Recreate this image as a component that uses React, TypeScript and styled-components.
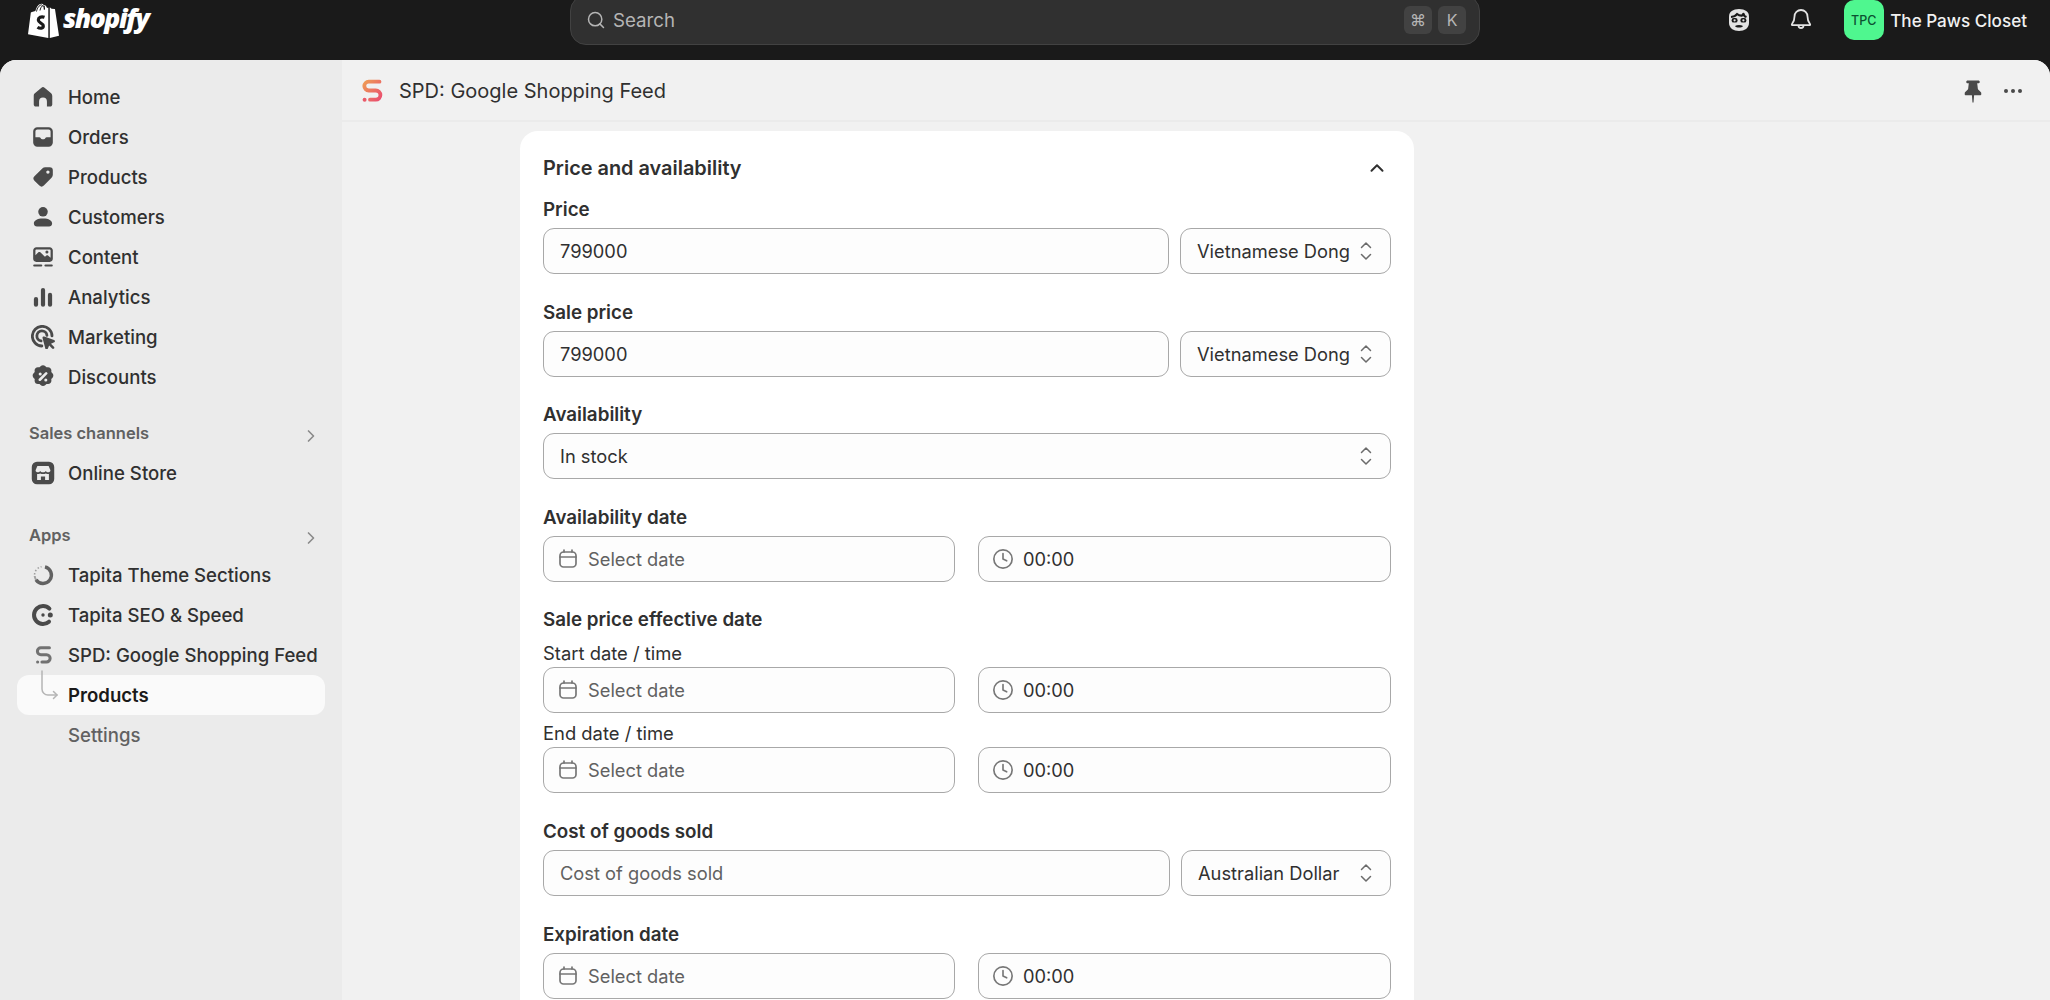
import React from 'react'
import styled, { createGlobalStyle } from 'styled-components'
import { ChevronRight, ChevronUp, Clock, Search } from 'lucide-react'

const GlobalStyle = createGlobalStyle`
    html, body {
        margin: 0;
        padding: 0;
        height: 100%;
        overflow: hidden;
        background: #1a1a1a;
    }
    * {
        box-sizing: border-box;
    }
    body {
        font-family: Inter, "Liberation Sans", sans-serif;
        color: #303030;
    }
`

/* ---------- icons ---------- */

const Icon = ({ children, size = 24 }: { children: React.ReactNode; size?: number }) => (
    <svg width={size} height={size} viewBox="1.450 1.450 17.100 17.100" fill="currentColor">
        {children}
    </svg>
)

const HomeIcon = () => (
    <Icon>
        <path d="M8.900 3.400a1.700 1.700 0 0 1 2.200 0l4.700 4a2.400 2.400 0 0 1 .8 1.800v6.100c0 .9-.7 1.500-1.500 1.500h-2.300v-3.600a2.800 2.800 0 0 0-5.600 0v3.600H4.900c-.8 0-1.500-.6-1.500-1.500V9.200c0-.7.3-1.400.8-1.800l4.700-4z" />
    </Icon>
)
const OrdersIcon = () => (
    <Icon>
        <path
            fillRule="evenodd"
            d="M6 3h8a3 3 0 0 1 3 3v8a3 3 0 0 1-3 3H6a3 3 0 0 1-3-3V6a3 3 0 0 1 3-3zM4.600 10.200V6c0-.8.6-1.400 1.400-1.400h8c.8 0 1.400.6 1.400 1.400v4.200h-2.700c-.5 0-.9.3-1.100.7-.2.4-.7.7-1.600.7s-1.400-.3-1.600-.7c-.2-.4-.6-.7-1.100-.7H4.600z"
        />
    </Icon>
)
const TagIcon = () => (
    <Icon>
        <path
            fillRule="evenodd"
            d="M11.600 3h3.200A2.200 2.200 0 0 1 17 5.200v3.200c0 .8-.3 1.500-.9 2.100l-5.500 5.600a2.300 2.300 0 0 1-3.200 0l-3.500-3.500a2.300 2.300 0 0 1 0-3.200l5.600-5.500c.6-.6 1.300-.9 2.100-.9zM13.500 7.700a1.200 1.200 0 1 0 0-2.400 1.200 1.200 0 0 0 0 2.400z"
        />
    </Icon>
)
const PersonIcon = () => (
    <Icon>
        <circle cx="10" cy="6.300" r="3.400" />
        <path d="M3.500 14.700c0-2.300 2.200-3.700 6.500-3.700s6.500 1.400 6.500 3.700c0 1.300-1 2.100-2.200 2.100H5.700c-1.200 0-2.200-.8-2.200-2.100z" />
    </Icon>
)
const ContentIcon = () => (
    <Icon>
        <path
            fillRule="evenodd"
            d="M5.200 3h9.600C16 3 17 4 17 5.200v6.100c0 1.200-1 2.200-2.200 2.200H5.200C4 13.500 3 12.500 3 11.300V5.200C3 4 4 3 5.200 3zM4.600 5.300v3.400l2.100-2c.4-.4 1-.4 1.400 0l3.300 3.100 1-.8c.4-.3.9-.3 1.200 0l1.800 1.500V5.300c0-.4-.3-.7-.7-.7H5.300c-.4 0-.7.3-.7.700zM12.800 7.500a1.100 1.100 0 1 0 0-2.200 1.100 1.100 0 0 0 0 2.200z"
        />
        <rect x="3" y="15.300" width="6.500" height="1.500" rx=".75" />
        <rect x="11" y="15.300" width="6" height="1.500" rx=".75" />
    </Icon>
)
const AnalyticsIcon = () => (
    <Icon>
        <rect x="3.500" y="10" width="3" height="7" rx="1.500" />
        <rect x="8.500" y="3.500" width="3" height="13.500" rx="1.500" />
        <rect x="13.500" y="7" width="3" height="10" rx="1.500" />
    </Icon>
)
const MarketingIcon = () => (
    <Icon>
        <path d="M9.200 16.400A7 7 0 1 1 16.400 9.200" fill="none" stroke="currentColor" strokeWidth="2" strokeLinecap="round" />
        <path d="M8.600 12.800A3.600 3.600 0 1 1 12.800 8.800" fill="none" stroke="currentColor" strokeWidth="2" strokeLinecap="round" />
        <path d="M9.700 10.900c-.3-.8.400-1.500 1.200-1.200l7 2.500c.8.300.8 1.300.1 1.600l-2.300 1 2.100 2.100c.4.400.4 1 0 1.300-.4.400-.9.400-1.300 0l-2.100-2.100-1 2.300c-.3.700-1.400.7-1.700-.1l-2-7.400z" />
    </Icon>
)
const DiscountIcon = () => (
    <Icon>
        <path
            fillRule="evenodd"
            d="M8.300 2.300c.9-.9 2.500-.9 3.400 0l.8.8 1.100-.1c1.300 0 2.400 1 2.400 2.400l-.1 1.100.8.8c.9.900.9 2.500 0 3.400l-.8.800.1 1.100c0 1.300-1 2.400-2.400 2.400l-1.100-.1-.8.800c-.9.900-2.500.9-3.400 0l-.8-.8-1.100.1c-1.300 0-2.400-1-2.400-2.400l.1-1.100-.8-.8c-.9-.9-.9-2.500 0-3.400l.8-.8-.1-1.100c0-1.300 1-2.400 2.400-2.400l1.100.1.8-.8zM8 9a1.100 1.100 0 1 0 0-2.200A1.100 1.100 0 0 0 8 9zm4 4.200a1.100 1.100 0 1 0 0-2.200 1.100 1.100 0 0 0 0 2.200zm.9-5.100a.9.900 0 0 0-1.300-1.300l-4.500 4.500a.9.900 0 0 0 1.300 1.300l4.500-4.500z"
        />
    </Icon>
)
const StoreIcon = () => (
    <Icon>
        <path
            fillRule="evenodd"
            d="M5.700 2h8.600A3.700 3.700 0 0 1 18 5.700v8.600a3.700 3.700 0 0 1-3.700 3.700H5.700A3.700 3.700 0 0 1 2 14.300V5.700A3.700 3.700 0 0 1 5.700 2zM6 5h8l1.300 3c0 1-.8 1.500-1.600 1.500S12.300 9 12 8.500c-.3.500-1 1-2 1s-1.700-.5-2-1c-.3.500-.9 1-1.700 1S4.700 9 4.700 8L6 5zm-.2 5.800c.9 0 1.600-.1 2.200-.5.600.3 1.200.5 2 .5s1.400-.2 2-.5c.6.400 1.300.5 2.200.5V15h-2.700v-2.500h-3V15H5.800v-4.200z"
        />
    </Icon>
)
const ThemeAppIcon = () => (
    <svg width="24" height="24" viewBox="0 0 24 24" fill="none" stroke="currentColor">
        <path d="M14 3.900A8.400 8.400 0 1 1 5 16.700" strokeWidth="3.400" opacity=".85" />
        <path d="M5 16.700A8.400 8.400 0 0 1 3.700 13" strokeWidth="2" opacity=".45" />
        <path d="M3.600 11.500A8.400 8.400 0 0 1 10.500 3.700" strokeWidth="1.600" strokeDasharray="1.400 2" opacity=".5" />
    </svg>
)
const SeoAppIcon = () => (
    <svg width="24" height="24" viewBox="0 0 24 24" fill="none" stroke="currentColor">
        <path d="M18.400 5.600A9 9 0 1 0 18 18.700" strokeWidth="4" strokeLinecap="round" />
        <circle cx="12" cy="12" r="1.700" fill="currentColor" stroke="none" />
        <circle cx="19.300" cy="12" r="2.500" fill="currentColor" stroke="none" />
    </svg>
)
const SpdLogo = ({ gradient, size = 24 }: { gradient?: boolean; size?: number }) => (
    <svg width={size} height={size * 1.15} viewBox="0 0 24 27.600" fill="none">
        {gradient && (
            <defs>
                <linearGradient id="spdGrad" x1="0" y1="0" x2="1" y2="1">
                    <stop offset="0" stopColor="#ee9a55" />
                    <stop offset="1" stopColor="#ea4e6f" />
                </linearGradient>
            </defs>
        )}
        <path
            d="M19.500 4.700H8.700a4.300 4.300 0 0 0 0 8.800h7.100a4.500 4.500 0 0 1 0 9.200H10"
            stroke={gradient ? 'url(#spdGrad)' : 'currentColor'}
            strokeWidth="3.800"
            strokeLinecap="round"
            opacity={gradient ? 1 : 0.75}
        />
        <circle cx="4.600" cy="22.700" r="2" fill={gradient ? '#ea5a6a' : 'currentColor'} opacity={gradient ? 1 : 0.75} />
    </svg>
)
const ConnectorIcon = () => (
    <svg width="22" height="32" viewBox="0 0 22 32" fill="none" stroke="#b5b5b5" strokeWidth="1.500" strokeLinecap="round" strokeLinejoin="round">
        <path d="M2 1v18a6 6 0 0 0 6 6h9" />
        <path d="M13.500 21.500L17 25l-3.500 3.500" />
    </svg>
)
const SortIcon = () => (
    <svg width="16" height="22" viewBox="0 0 16 22" fill="none" stroke="#6b6b6b" strokeWidth="1.500" strokeLinecap="round" strokeLinejoin="round">
        <path d="M3.500 7.500L8 3l4.500 4.500" />
        <path d="M3.500 14.500L8 19l4.500-4.500" />
    </svg>
)
const CalendarIcon = () => (
    <svg width="22" height="22" viewBox="0 0 22 22" fill="none" stroke="#777" strokeWidth="1.700" strokeLinecap="round">
        <rect x="3" y="4" width="16" height="15" rx="3.500" />
        <path d="M3 9h16M7 2v2M15 2v2" />
    </svg>
)
const PinIcon = () => (
    <Icon size={24}>
        <path d="M6.200 2.500h7.600c.6 0 1 .4 1 1s-.4 1-1 1H13l.5 4.200 2 2.100c.3.300.4.500.4.900v.600c0 .500-.4.800-.8.800h-4.300l-.4 4.700c0 .3-.2.500-.4.500s-.4-.2-.4-.5l-.4-4.700H4.900c-.5 0-.8-.3-.8-.8v-.600c0-.4.100-.6.400-.9l2-2.100L7 4.500h-.8c-.6 0-1-.4-1-1s.4-1 1-1z" />
    </Icon>
)
const BellIcon = () => (
    <svg width="24" height="26" viewBox="0 0 24 26" fill="none" stroke="currentColor" strokeWidth="1.800" strokeLinejoin="round">
        <path d="M12 3a6.500 6.500 0 0 0-6.500 6.500c0 4-1.200 6-2.500 7.500-.4.500-.1 1.200.6 1.200h16.800c.7 0 1-.7.600-1.200-1.300-1.500-2.500-3.500-2.500-7.500A6.500 6.500 0 0 0 12 3z" />
        <path d="M9.500 18.500a2.500 2.500 0 0 0 5 0" />
    </svg>
)
const FaceIcon = () => (
    <svg width="22" height="24" viewBox="0 0 22 24" fill="none">
        <path d="M1 8.500C1 3.800 5 1 11 1s10 2.800 10 7.500v6.500c0 5-4.500 8-10 8S1 20 1 15V8.500z" fill="currentColor" />
        <path d="M3 9c2.500-.2 4.500-.8 6-3 1.500 1.200 3 1.800 5 1.600l1.500-1.800 1 2.400 2 .8" stroke="#1a1a1a" strokeWidth="2.200" strokeLinejoin="round" />
        <rect x="3.600" y="10" width="6" height="4.600" rx="2.200" fill="#1a1a1a" />
        <rect x="12.400" y="10" width="6" height="4.600" rx="2.200" fill="#1a1a1a" />
        <circle cx="6.600" cy="12.300" r="1.100" fill="currentColor" />
        <circle cx="15.400" cy="12.300" r="1.100" fill="currentColor" />
        <path d="M7 18c2.200-1.400 5.800-1.400 8 0-1 2-7 2-8 0z" fill="#1a1a1a" />
    </svg>
)
const ShopifyBag = () => (
    <svg width="31" height="36" viewBox="0 0 31 36">
        <path
            fill="#fff"
            d="M20.500 5.500l-1.500.5c-.4-1.500-1.300-3-3-3h-.300C15 2 14.300 1.600 13.600 1.700 9.800 1.800 8 6.600 7.400 9l-3.500 1.100c-1 .3-1.100.4-1.200 1.300L0 32.300 20.300 36V5.500h.2z"
        />
        <path fill="#fff" d="M21.800 36L31 33.700 27 7.200c0-.2-.2-.3-.4-.3l-3-.2-1.800-1.500V36z" />
        <path
            fill="none"
            stroke="#1a1a1a"
            strokeWidth="1"
            d="M8.500 9.500C9 6.500 11 3 13.800 2.800M12 8.500c.3-2 1.500-4.500 3-5 1 1 1.200 2.800 1.200 4M16.500 7.500c.1-1.500 0-3-.5-4"
        />
        <path
            fill="none"
            stroke="#1a1a1a"
            strokeWidth="3.200"
            d="M16.500 15.300c-3.400-1.200-6.200.2-6.200 2.600 0 3.200 5 3 5 6 0 2.600-3.300 3-5.800 1.300"
        />
    </svg>
)

/* ---------- shell ---------- */

const Page = styled.div`
    width: 2050px;
    height: 1000px;
    display: flex;
    flex-direction: column;
    overflow: hidden;
    background: #1a1a1a;
`

const TopBar = styled.header`
    height: 60px;
    flex: none;
    display: grid;
    grid-template-columns: 570px 910px 1fr;
    grid-template-rows: 40px;
    align-items: center;
    color: #e3e3e3;
`

const Brand = styled.div`
    display: flex;
    align-items: center;
    gap: 4px;
    padding-left: 28px;
    color: #fff;
`

const BrandName = styled.span`
    font-family: "Open Sans", Inter, sans-serif;
    font-size: 26.500px;
    font-weight: 800;
    font-style: italic;
    letter-spacing: -1.500px;
    line-height: 1;
    margin-top: -4px;
`

const SearchBox = styled.div`
    height: 50px;
    display: flex;
    align-items: center;
    gap: 6px;
    padding: 0 13px 0 15px;
    background: #303030;
    border: 1px solid #424242;
    border-radius: 16px;
    color: #b5b5b5;
    font-size: 18.700px;
`

const SearchLabel = styled.span`
    flex: 1;
    margin-left: 1px;
`

const Kbd = styled.span`
    width: 28px;
    height: 28px;
    display: flex;
    align-items: center;
    justify-content: center;
    background: #424242;
    border-radius: 6px;
    font-size: 16px;
    color: #b5b5b5;
`

const TopActions = styled.div`
    display: flex;
    align-items: center;
    justify-content: flex-end;
    padding-right: 23px;
`

const TopIcon = styled.span<{ $gap: number }>`
    display: flex;
    margin-right: ${({ $gap }) => $gap}px;
`

const Avatar = styled.span`
    width: 40px;
    height: 40px;
    display: flex;
    align-items: center;
    justify-content: center;
    background: #4ff78f;
    border-radius: 10px;
    color: #0c5132;
    font-size: 12.500px;
    font-weight: 500;
`

const ShopName = styled.span`
    margin-left: 6.500px;
    font-size: 17.100px;
    font-weight: 500;
    color: #f1f1f1;
`

const Body = styled.div`
    flex: 1;
    min-height: 0;
    display: flex;
    overflow: hidden;
    border-radius: 16px 16px 0 0;
    background: #f1f1f1;
`

/* ---------- sidebar ---------- */

const Sidebar = styled.nav`
    width: 342px;
    flex: none;
    background: #ebebeb;
    padding: 16.600px 17px 0;
`

const NavSection = styled.div<{ $top?: number }>`
    margin-top: ${({ $top = 0 }) => $top}px;
`

const SectionHead = styled.div`
    height: 40px;
    display: flex;
    align-items: center;
    justify-content: space-between;
    padding: 0 0 0 12px;
    font-size: 16.500px;
    font-weight: 600;
    color: #616161;
`

const HeadChevron = styled.span`
    display: flex;
    margin: 7px 4px 0 0;
    color: #8a8a8a;
`

const NavRow = styled.a<{ $active?: boolean; $muted?: boolean }>`
    position: relative;
    height: 40px;
    display: flex;
    align-items: center;
    gap: 13px;
    padding-left: 14px;
    border-radius: 12px;
    font-size: 18.600px;
    font-weight: ${({ $active }) => ($active ? 600 : 500)};
    color: ${({ $active, $muted }) => ($active ? '#1a1a1a' : $muted ? '#616161' : '#303030')};
    background: ${({ $active }) => ($active ? '#fafafa' : 'transparent')};
    white-space: nowrap;
`

const NavIcon = styled.span`
    width: 24px;
    height: 24px;
    flex: none;
    display: flex;
    align-items: center;
    justify-content: center;
    color: #4a4a4a;
`

const Connector = styled.span`
    position: absolute;
    left: 23px;
    top: -5px;
    display: flex;
`

/* ---------- main ---------- */

const Main = styled.main`
    flex: 1;
    min-width: 0;
    background: #f1f1f1;
`

const AppHeader = styled.div`
    height: 62px;
    display: flex;
    align-items: center;
    padding: 2px 28px 0 18px;
    border-bottom: 2px solid #ebebeb;
`

const AppTitle = styled.h1`
    flex: 1;
    margin: 0 0 0 15px;
    font-size: 20px;
    font-weight: 400;
    color: #303030;
`

const HeaderAction = styled.span`
    display: flex;
    margin-right: 1px;
    color: #4a4a4a;
`

const Dots = styled.span`
    display: flex;
    gap: 3px;
    margin-left: 18px;

    & > i {
        width: 4px;
        height: 4px;
        border-radius: 50%;
        background: #4a4a4a;
    }
`

const Card = styled.section`
    width: 894px;
    margin: 9px 0 0 178px;
    padding: 23px 23px 40px;
    background: #fff;
    border-radius: 18px 18px 0 0;
`

const CardHead = styled.div`
    height: 28px;
    display: flex;
    align-items: center;
    justify-content: space-between;
    padding-right: 3px;
    margin-bottom: 16px;
    color: #303030;
`

const CardTitle = styled.h2`
    margin: 0;
    font-size: 19.900px;
    font-weight: 600;
`

const Form = styled.div`
    display: flex;
    flex-direction: column;
    gap: 26.600px;
`

const Field = styled.div`
    display: flex;
    flex-direction: column;
`

const Label = styled.label<{ $sub?: boolean }>`
    height: 24px;
    line-height: 24px;
    margin-bottom: ${({ $sub }) => ($sub ? 2 : 6)}px;
    font-size: ${({ $sub }) => ($sub ? 18.400 : 18.800)}px;
    font-weight: ${({ $sub }) => ($sub ? 400 : 600)};
    color: #303030;
`

const GroupLabel = styled(Label)`
    margin-bottom: 9px;
`

const SubField = styled.div`
    display: flex;
    flex-direction: column;
    margin-bottom: 8px;

    &:last-child {
        margin-bottom: 0;
    }
`

const Row = styled.div<{ $even?: boolean; $gap: number }>`
    display: ${({ $even }) => ($even ? 'grid' : 'flex')};
    grid-template-columns: 412px 1fr;
    gap: ${({ $gap }) => $gap}px;
`

const Control = styled.div<{ $grow?: boolean; $width?: number; $hasIcon?: boolean }>`
    height: 46px;
    flex: ${({ $grow }) => ($grow ? '1' : 'none')};
    width: ${({ $width }) => ($width ? `${$width}px` : 'auto')};
    min-width: 0;
    display: flex;
    align-items: center;
    gap: ${({ $hasIcon }) => ($hasIcon ? '9px' : '0')};
    padding: ${({ $hasIcon }) => ($hasIcon ? '0 15px 0 13px' : '0 16px 0 16px')};
    background: #fdfdfd;
    border: 1.300px solid #a8a8a8;
    border-radius: 11px;
    font-size: 18.300px;
    color: #303030;
    white-space: nowrap;
`

const Value = styled.span<{ $placeholder?: boolean }>`
    flex: 1;
    color: ${({ $placeholder }) => ($placeholder ? '#616161' : '#303030')};
`

const ClockWrap = styled.span`
    display: flex;
    color: #777;
`

/* ---------- data ---------- */

const mainNav = [
    { label: 'Home', icon: <HomeIcon /> },
    { label: 'Orders', icon: <OrdersIcon /> },
    { label: 'Products', icon: <TagIcon /> },
    { label: 'Customers', icon: <PersonIcon /> },
    { label: 'Content', icon: <ContentIcon /> },
    { label: 'Analytics', icon: <AnalyticsIcon /> },
    { label: 'Marketing', icon: <MarketingIcon /> },
    { label: 'Discounts', icon: <DiscountIcon /> }
]

const TextField = ({ value, placeholder }: { value: string; placeholder?: boolean }) => (
    <Control $grow>
        <Value $placeholder={placeholder}>{value}</Value>
    </Control>
)

const SelectField = ({ value, width, grow }: { value: string; width?: number; grow?: boolean }) => (
    <Control $width={width} $grow={grow}>
        <Value>{value}</Value>
        <SortIcon />
    </Control>
)

const DateTimeRow = () => (
    <Row $even $gap={23}>
        <Control $hasIcon>
            <CalendarIcon />
            <Value $placeholder>Select date</Value>
        </Control>
        <Control $hasIcon>
            <ClockWrap>
                <Clock size={22} strokeWidth={1.800} />
            </ClockWrap>
            <Value>00:00</Value>
        </Control>
    </Row>
)

export default function App() {
    return (
        <Page>
            <GlobalStyle />
            <TopBar>
                <Brand>
                    <ShopifyBag />
                    <BrandName>shopify</BrandName>
                </Brand>
                <SearchBox>
                    <Search size={20} strokeWidth={1.800} />
                    <SearchLabel>Search</SearchLabel>
                    <Kbd>⌘</Kbd>
                    <Kbd>K</Kbd>
                </SearchBox>
                <TopActions>
                    <TopIcon $gap={39}>
                        <FaceIcon />
                    </TopIcon>
                    <TopIcon $gap={31}>
                        <BellIcon />
                    </TopIcon>
                    <Avatar>TPC</Avatar>
                    <ShopName>The Paws Closet</ShopName>
                </TopActions>
            </TopBar>
            <Body>
                <Sidebar>
                    <NavSection>
                        {mainNav.map(item => (
                            <NavRow key={item.label}>
                                <NavIcon>{item.icon}</NavIcon>
                                {item.label}
                            </NavRow>
                        ))}
                    </NavSection>
                    <NavSection $top={16.400}>
                        <SectionHead>
                            Sales channels
                            <HeadChevron>
                                <ChevronRight size={20} strokeWidth={2} />
                            </HeadChevron>
                        </SectionHead>
                        <NavRow>
                            <NavIcon>
                                <StoreIcon />
                            </NavIcon>
                            Online Store
                        </NavRow>
                    </NavSection>
                    <NavSection $top={22}>
                        <SectionHead>
                            Apps
                            <HeadChevron>
                                <ChevronRight size={20} strokeWidth={2} />
                            </HeadChevron>
                        </SectionHead>
                        <NavRow>
                            <NavIcon>
                                <ThemeAppIcon />
                            </NavIcon>
                            Tapita Theme Sections
                        </NavRow>
                        <NavRow>
                            <NavIcon>
                                <SeoAppIcon />
                            </NavIcon>
                            Tapita SEO &amp; Speed
                        </NavRow>
                        <NavRow>
                            <NavIcon>
                                <SpdLogo size={19} />
                            </NavIcon>
                            SPD: Google Shopping Feed
                        </NavRow>
                        <NavRow $active>
                            <NavIcon />
                            <Connector>
                                <ConnectorIcon />
                            </Connector>
                            Products
                        </NavRow>
                        <NavRow $muted>
                            <NavIcon />
                            Settings
                        </NavRow>
                    </NavSection>
                </Sidebar>
                <Main>
                    <AppHeader>
                        <SpdLogo gradient />
                        <AppTitle>SPD: Google Shopping Feed</AppTitle>
                        <HeaderAction>
                            <PinIcon />
                        </HeaderAction>
                        <Dots>
                            <i />
                            <i />
                            <i />
                        </Dots>
                    </AppHeader>
                    <Card>
                        <CardHead>
                            <CardTitle>Price and availability</CardTitle>
                            <ChevronUp size={22} strokeWidth={2.200} />
                        </CardHead>
                        <Form>
                            <Field>
                                <Label>Price</Label>
                                <Row $gap={11}>
                                    <TextField value="799000" />
                                    <SelectField value="Vietnamese Dong" width={211} />
                                </Row>
                            </Field>
                            <Field>
                                <Label>Sale price</Label>
                                <Row $gap={11}>
                                    <TextField value="799000" />
                                    <SelectField value="Vietnamese Dong" width={211} />
                                </Row>
                            </Field>
                            <Field>
                                <Label>Availability</Label>
                                <SelectField value="In stock" />
                            </Field>
                            <Field>
                                <Label>Availability date</Label>
                                <DateTimeRow />
                            </Field>
                            <Field>
                                <GroupLabel>Sale price effective date</GroupLabel>
                                <SubField>
                                    <Label $sub>Start date / time</Label>
                                    <DateTimeRow />
                                </SubField>
                                <SubField>
                                    <Label $sub>End date / time</Label>
                                    <DateTimeRow />
                                </SubField>
                            </Field>
                            <Field>
                                <Label>Cost of goods sold</Label>
                                <Row $gap={11}>
                                    <TextField value="Cost of goods sold" placeholder />
                                    <SelectField value="Australian Dollar" width={210} />
                                </Row>
                            </Field>
                            <Field>
                                <Label>Expiration date</Label>
                                <DateTimeRow />
                            </Field>
                        </Form>
                    </Card>
                </Main>
            </Body>
        </Page>
    )
}
